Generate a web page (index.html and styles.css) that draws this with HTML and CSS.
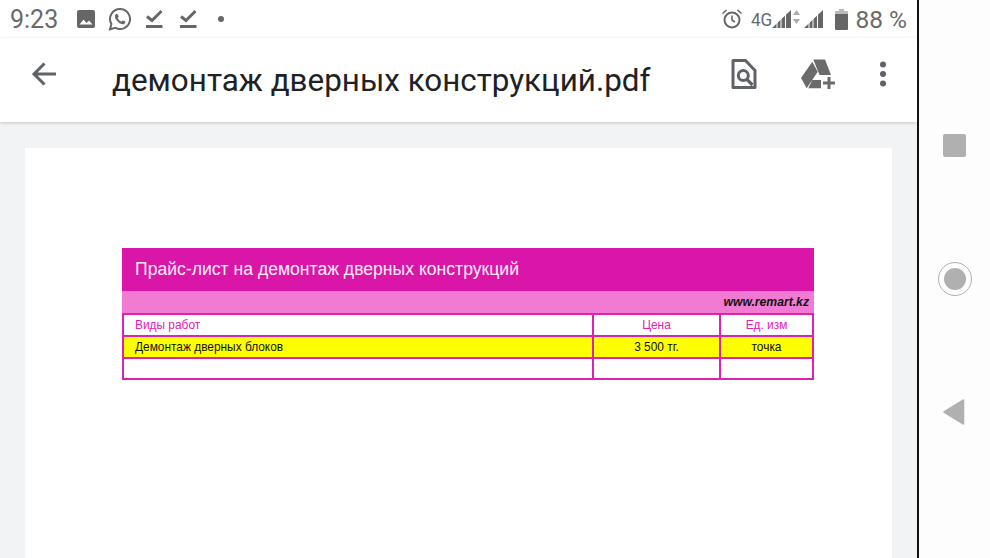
FILE: index.html
```html
<!DOCTYPE html>
<html lang="ru">
<head>
  <meta charset="UTF-8">
  <title>демонтаж дверных конструкций.pdf</title>
  <link rel="stylesheet" href="styles.css">
</head>
<body>

<div class="screen">
  <div class="app">
    <div class="status-bar">
      <div class="status-left">
        <span class="clock">9:23</span>
        <svg class="notif notif-img" width="20" height="20" viewBox="0 0 20 20"><path fill="#666" d="M3 1h14a2 2 0 0 1 2 2v14a2 2 0 0 1-2 2H3a2 2 0 0 1-2-2V3a2 2 0 0 1 2-2z"/><path fill="#fff" d="M3.500 15.500l4-5 3 3.500 2.500-2.500 3.500 4z"/></svg>
        <svg class="notif" width="24" height="24" viewBox="0 0 24 24"><path fill="none" stroke="#666" stroke-width="2" d="M12 2a10 10 0 0 0-8.600 15L2 22.300l5.500-1.400A10 10 0 1 0 12 2z"/><path fill="#666" d="M8.700 6.800c-.6 0-1.700 1-1.700 2.700 0 3 3.800 7.200 7.400 7.700 1.700.2 3-1 3-2.300 0-.5-2.300-1.700-2.700-1.500-.5.200-.8 1.200-1.300 1.200-1 0-3.600-2.500-3.700-3.500 0-.5.900-.9 1-1.400 0-.5-1-2.900-2-2.900z"/></svg>
        <svg class="notif" width="20" height="20" viewBox="0 0 20 20"><path fill="none" stroke="#666" stroke-width="3" d="M1 7.500l5 4L15.500 2"/><path fill="#666" d="M0 16h16.500v3H0z"/></svg>
        <svg class="notif" width="20" height="20" viewBox="0 0 20 20"><path fill="none" stroke="#666" stroke-width="3" d="M1 7.500l5 4L15.500 2"/><path fill="#666" d="M0 16h16.500v3H0z"/></svg>
        <span class="dot"></span>
      </div>
      <div class="status-right">
        <svg width="22" height="22" viewBox="0 0 22 22"><circle cx="11" cy="12" r="7.500" fill="none" stroke="#666" stroke-width="2"/><path fill="none" stroke="#666" stroke-width="1.600" d="M11 7.500V12l3 2M1.500 5.500L5.500 2M20.500 5.500L16.500 2"/></svg>
        <span class="net">4G</span>
        <svg width="20" height="20" viewBox="0 0 20 20"><path fill="#666" d="M0 19L19 1v18z"/><path stroke="#fff" stroke-width="1" d="M5 19V10M9 19V6M13.500 19V2"/></svg>
        <svg class="arrows" width="7" height="14" viewBox="0 0 7 14"><path fill="#aaa" d="M3.500 0L7 5H0zM3.500 14L0 9h7z"/></svg>
        <svg width="20" height="20" viewBox="0 0 20 20"><path fill="#666" d="M0 19L19 1v18z"/><path stroke="#fff" stroke-width="1" d="M5 19V10M9 19V6M13.500 19V2"/></svg>
        <svg class="battery" width="13" height="21" viewBox="0 0 13 21"><path fill="#bbb" d="M4 0h5v2h3a1 1 0 0 1 1 1v4H0V3a1 1 0 0 1 1-1h3z"/><path fill="#666" d="M0 5h13v15a1 1 0 0 1-1 1H1a1 1 0 0 1-1-1z"/></svg>
        <span class="percent">88 %</span>
      </div>
    </div>

    <div class="toolbar">
      <svg class="back" width="25" height="24" viewBox="0 0 25 24"><path fill="none" stroke="#5f6368" stroke-width="3" d="M25 12H3M13.500 1.500L3 12l10.500 10.500"/></svg>
      <h1 class="doc-title">демонтаж дверных конструкций.pdf</h1>
      <div class="actions">
        <svg width="26" height="30" viewBox="0 0 26 30"><path fill="none" stroke="#5f6368" stroke-width="3" stroke-linejoin="round" d="M2 1.500h12.500l9.500 10v17H2z"/><circle cx="12.300" cy="16.500" r="5" fill="none" stroke="#5f6368" stroke-width="3"/><path stroke="#5f6368" stroke-width="3.200" d="M15.500 20l6 6"/></svg>
        <svg width="34" height="30" viewBox="0 0 34 30"><path fill="#6b6b6b" d="M12.300.5H24L30 16H18.500zM0 19L11.300 2.700l5.400 10L5.700 29.300zM11.300 21H20v8.300H7.300z"/><path fill="#6b6b6b" d="M26.500 18h3v4.500H34v3h-4.500V30h-3v-4.500H22v-3h4.500z"/></svg>
        <svg width="8" height="26" viewBox="0 0 8 26"><circle cx="4" cy="3.500" r="3" fill="#5f6368"/><circle cx="4" cy="13" r="3" fill="#5f6368"/><circle cx="4" cy="22.500" r="3" fill="#5f6368"/></svg>
      </div>
    </div>

    <div class="viewer">
      <div class="pdf-page">
        <div class="sheet">
          <div class="sheet-title">Прайс-лист на демонтаж дверных конструкций</div>
          <div class="sheet-site">www.remart.kz</div>
          <table class="price-table">
            <colgroup><col class="col-name"><col class="col-price"><col class="col-unit"></colgroup>
            <tr class="head">
              <td class="name">Виды работ</td>
              <td>Цена</td>
              <td>Ед. изм</td>
            </tr>
            <tr class="hl">
              <td class="name">Демонтаж дверных блоков</td>
              <td>3 500 тг.</td>
              <td>точка</td>
            </tr>
            <tr class="empty">
              <td class="name"></td>
              <td></td>
              <td></td>
            </tr>
          </table>
        </div>
      </div>
    </div>
  </div>

  <div class="nav-bar">
    <div class="nav-square"></div>
    <div class="nav-home"><span></span></div>
    <svg class="nav-back" width="24" height="28" viewBox="0 0 24 28"><path fill="#b0b0b0" stroke="#b0b0b0" stroke-width="1.500" stroke-linejoin="round" d="M20.500 2v24L1 14z"/></svg>
  </div>
</div>

</body>
</html>
```

FILE: styles.css
```css
body {
  margin: 0;
  background: #fff;
  font-family: Roboto, "Liberation Sans", sans-serif;
  overflow: hidden;
}

.screen {
  display: flex;
  width: 990px;
  height: 558px;
  overflow: hidden;
}

.app {
  width: 917px;
  flex-shrink: 0;
  display: flex;
  flex-direction: column;
  border-right: 2px solid #111;
}

/* status bar */
.status-bar {
  height: 38px;
  display: flex;
  justify-content: space-between;
  align-items: center;
  padding: 0 10px;
  color: #6a6a6a;
}

.status-left {
  display: flex;
  align-items: center;
}

.clock {
  font-size: 25px;
  width: 66px;
}

.notif {
  margin-right: 14px;
}

.notif-img {
  margin-right: 12px;
}

.dot {
  width: 6px;
  height: 6px;
  margin-left: 4px;
  border-radius: 50%;
  background: #666;
}

.status-right {
  display: flex;
  align-items: center;
}

.net {
  font-size: 18px;
  margin-left: 8px;
  transform: scaleX(0.95);
  transform-origin: left;
  width: 21px;
}

.arrows {
  margin: 0 4px 4px 1px;
}

.battery {
  margin: 0 7px 0 11px;
}

.percent {
  font-size: 24.5px;
}

/* toolbar */
.toolbar {
  height: 84px;
  display: flex;
  align-items: center;
  padding: 0 30px 0 31px;
  box-shadow: 0 1px 3px rgba(60, 64, 67, 0.25);
  position: relative;
}

.back {
  margin: 0 56px 12px 0;
}

.doc-title {
  flex: 1;
  margin: 0;
  font-family: Roboto, sans-serif;
  font-size: 31.4px;
  font-weight: 400;
  color: #202124;
  white-space: nowrap;
}

.actions {
  display: flex;
  align-items: center;
  gap: 44px;
  margin-bottom: 12px;
}

/* pdf viewer */
.viewer {
  flex: 1;
  background: #f1f3f4;
  padding: 26px 25px 0;
  overflow: hidden;
}

.pdf-page {
  height: 100%;
  background: #fff;
  padding: 100px 78px 0 97px;
}

.sheet {
  width: 692px;
  font-family: "Liberation Sans", Arial, sans-serif;
}

.sheet-title {
  height: 43px;
  line-height: 43px;
  padding-left: 13px;
  background: #d916a8;
  color: #fdeef9;
  font-size: 17.6px;
}

.sheet-site {
  height: 22px;
  line-height: 23px;
  padding-right: 5px;
  background: #f17bd2;
  color: #111;
  font-size: 12.2px;
  font-weight: bold;
  font-style: italic;
  text-align: right;
}

.price-table {
  width: 692px;
  table-layout: fixed;
  border-collapse: collapse;
  font-size: 11.9px;
}

.col-name {
  width: 470px;
}

.col-price {
  width: 127px;
}

.price-table td {
  height: 20px;
  padding: 0;
  border: 2px solid #e020b0;
  text-align: center;
  color: #111;
}

.price-table td.name {
  text-align: left;
  padding-left: 11px;
}

.head td {
  color: #e020b0;
}

.hl td {
  background: #ffff00;
}

.price-table .empty td {
  height: 19px;
}

/* android nav */
.nav-bar {
  flex: 1;
  display: flex;
  flex-direction: column;
  align-items: center;
  padding-top: 134px;
  gap: 105px;
  background: #fdfdfd;
}

.nav-square {
  width: 23px;
  height: 23px;
  border-radius: 2px;
  background: #b0b0b0;
}

.nav-home {
  width: 34px;
  height: 34px;
  box-sizing: border-box;
  display: flex;
  align-items: center;
  justify-content: center;
  border: 1.500px solid #b0b0b0;
  border-radius: 50%;
}

.nav-home span {
  width: 22px;
  height: 22px;
  border-radius: 50%;
  background: #b0b0b0;
}

.nav-back {
  margin-top: -3px;
}
```
